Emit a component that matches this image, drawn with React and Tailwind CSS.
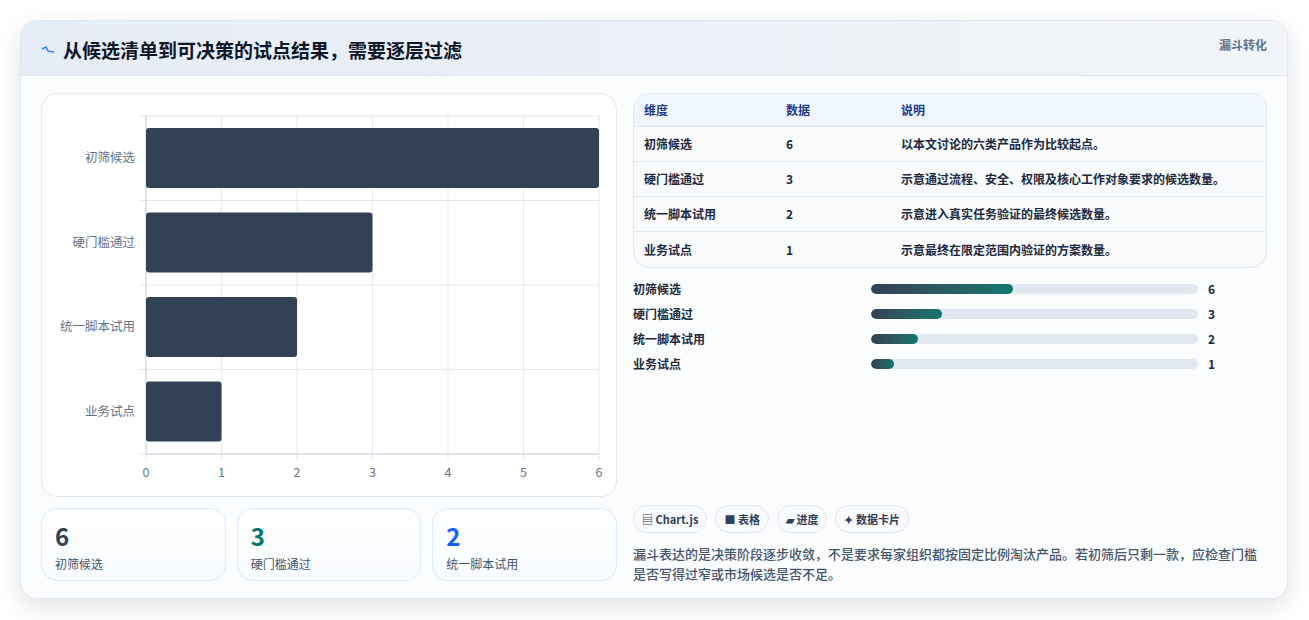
const F = { fontFamily: '"Noto Sans CJK SC", "Noto Sans", sans-serif' };
const cats = [["初筛候选", 6], ["硬门槛通过", 3], ["统一脚本试用", 2], ["业务试点", 1]];
const rows = [
  ["初筛候选", "6", "以本文讨论的六类产品作为比较起点。"],
  ["硬门槛通过", "3", "示意通过流程、安全、权限及核心工作对象要求的候选数量。"],
  ["统一脚本试用", "2", "示意进入真实任务验证的最终候选数量。"],
  ["业务试点", "1", "示意最终在限定范围内验证的方案数量。"],
];

function Chart() {
  const x0 = 104, w = 453, y0 = 22, h = 338;
  const step = w / 6, band = h / 4;
  return (
    <svg width="576" height="403" className="block">
      {Array.from({ length: 7 }).map((_, i) => (
        <line key={i} x1={x0 + i * step} x2={x0 + i * step} y1={y0} y2={y0 + h + 6} stroke="#e5e7eb" />
      ))}
      {Array.from({ length: 5 }).map((_, i) => (
        <line key={i} x1={x0 - 6} x2={x0 + w} y1={y0 + i * band} y2={y0 + i * band} stroke="#e5e7eb" />
      ))}
      <line x1={x0} x2={x0 + w} y1={y0 + h} y2={y0 + h} stroke="#cbd5e1" />
      <line x1={x0} x2={x0} y1={y0} y2={y0 + h} stroke="#cbd5e1" />
      {cats.map(([l, v], i) => (
        <g key={l}>
          <rect x={x0} y={y0 + i * band + 12} width={v * step} height={60} rx="3" fill="#334155" />
          <text x={x0 - 11} y={y0 + i * band + 46} textAnchor="end" fontSize="12.5" fill="#64748b" style={F}>{l}</text>
        </g>
      ))}
      {Array.from({ length: 7 }).map((_, i) => (
        <text key={i} x={x0 + i * step} y={y0 + h + 23} textAnchor="middle" fontSize="12.5" fill="#64748b" style={F}>{i}</text>
      ))}
    </svg>
  );
}

export default function App() {
  return (
    <div className="w-[1309px] h-[620px] bg-white pt-5 px-5" style={F}>
      <div className="w-[1268px] h-[579px] rounded-2xl border border-slate-200 shadow-[0_8px_24px_rgba(15,23,42,0.12)] overflow-hidden bg-[#fbfcfe]">
        <div className="h-[55px] bg-gradient-to-r from-[#e6ecf5] to-[#f1f5f9] border-b border-slate-200 flex items-start justify-between px-5">
          <div className="flex items-center gap-2 mt-[15px]">
            <svg width="14" height="10" viewBox="0 0 14 10"><path d="M1 4 L5 2 L7 6 L13 7" stroke="#3b82f6" strokeWidth="1.6" fill="none" /></svg>
            <span className="text-[19px] font-bold text-slate-900">从候选清单到可决策的试点结果，需要逐层过滤</span>
          </div>
          <span className="mt-[15px] text-[12px] font-bold text-slate-500">漏斗转化</span>
        </div>
        <div className="flex gap-4 px-5 pt-[17px]">
          <div className="w-[576px] flex flex-col gap-[11px]">
            <div className="h-[404px] rounded-2xl border border-slate-200 bg-white"><Chart /></div>
            <div className="grid grid-cols-3 gap-[11px]">
              {[["6", "text-slate-700", "初筛候选"], ["3", "text-teal-700", "硬门槛通过"], ["2", "text-blue-600", "统一脚本试用"]].map(([n, c, l]) => (
                <div key={l} className="h-[73px] rounded-2xl border border-blue-100 bg-gradient-to-b from-white to-[#f8fbff] px-[13px] pt-[10px]">
                  <div className={`text-[24px] font-bold leading-[34px] ${c}`}>{n}</div>
                  <div className="text-[12px] text-slate-600 mt-0.5">{l}</div>
                </div>
              ))}
            </div>
          </div>
          <div className="flex-1 flex flex-col">
            <div className="rounded-2xl border border-slate-200 overflow-hidden bg-[#f8fafc] text-[12px] font-semibold">
              <div className="flex h-[33px] items-center bg-[#eff6ff] border-b border-slate-200 text-[#1e3a8a]">
                <div className="w-[152px] pl-[10px]">维度</div><div className="w-[115px]">数据</div><div>说明</div>
              </div>
              {rows.map((r, i) => (
                <div key={i} className={`flex h-[35px] items-center text-slate-800 ${i < 3 ? "border-b border-slate-200" : ""}`}>
                  <div className="w-[152px] pl-[10px]">{r[0]}</div><div className="w-[115px]">{r[1]}</div><div>{r[2]}</div>
                </div>
              ))}
            </div>
            <div className="mt-[12px] flex flex-col gap-[7px]">
              {cats.map(([l, v]) => (
                <div key={l} className="flex items-center h-[18px] text-[12px] font-semibold text-slate-800">
                  <div className="w-[238px]">{l}</div>
                  <div className="w-[327px] h-[10px] rounded-full bg-slate-200 overflow-hidden">
                    <div className="h-full rounded-full bg-gradient-to-r from-[#334155] to-[#0f766e]" style={{ width: `${v === 1 ? 7 : v * 7.25}%` }} />
                  </div>
                  <div className="ml-[10px] font-bold">{v}</div>
                </div>
              ))}
            </div>
            <div className="mt-[132px] flex gap-2">
              {["▤ Chart.js", "■ 表格", "▰ 进度", "✦ 数据卡片"].map((c) => (
                <span key={c} className="h-[28px] px-2 rounded-full border border-slate-200 bg-slate-50 text-[11px] font-bold text-slate-700 flex items-center">{c}</span>
              ))}
            </div>
            <p className="mt-[11px] text-[13px] leading-[20px] text-slate-600 font-medium">漏斗表达的是决策阶段逐步收敛，不是要求每家组织都按固定比例淘汰产品。若初筛后只剩一款，应检查门槛是否写得过窄或市场候选是否不足。</p>
          </div>
        </div>
      </div>
    </div>
  );
}
